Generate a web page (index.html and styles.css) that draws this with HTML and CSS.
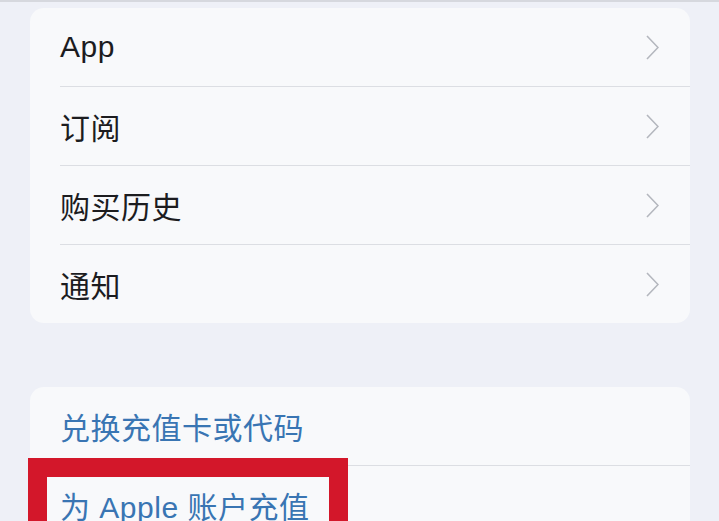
FILE: index.html
```html
<!DOCTYPE html>
<html lang="zh-CN">

<head>
    <meta charset="UTF-8">
    <meta name="viewport" content="width=device-width, initial-scale=1.0">
    <title>账户设置</title>
    <link rel="stylesheet" href="styles.css">
</head>

<body>
    <div class="group">
        <div class="row">
            <span class="label">App</span>
            <svg class="chevron" width="13" height="25" viewBox="0 0 13 25"><polyline points="1,1 12,12.5 1,24" /></svg>
        </div>
        <div class="row">
            <span class="label">订阅</span>
            <svg class="chevron" width="13" height="25" viewBox="0 0 13 25"><polyline points="1,1 12,12.5 1,24" /></svg>
        </div>
        <div class="row">
            <span class="label">购买历史</span>
            <svg class="chevron" width="13" height="25" viewBox="0 0 13 25"><polyline points="1,1 12,12.5 1,24" /></svg>
        </div>
        <div class="row">
            <span class="label">通知</span>
            <svg class="chevron" width="13" height="25" viewBox="0 0 13 25"><polyline points="1,1 12,12.5 1,24" /></svg>
        </div>
    </div>

    <div class="group group-links">
        <div class="row">
            <span class="label link">兑换充值卡或代码</span>
        </div>
        <div class="row">
            <span class="label link">为 Apple 账户充值</span>
        </div>
        <div class="highlight"></div>
    </div>
</body>

</html>
```

FILE: styles.css
```css
body {
    margin: 0;
    padding: 6px 29px 0 30px;
    border-top: 2px solid #d6d8de;
    background-color: #eef0f7;
    font-family: "Liberation Sans", "Noto Sans CJK SC", sans-serif;
    height: 513px;
    overflow: hidden;
    display: flex;
    flex-direction: column;
    gap: 64px;
}

.group {
    background-color: #f8f9fb;
    border-radius: 14px;
    display: flex;
    flex-direction: column;
}

.group-links {
    position: relative;
}

.row {
    height: 78px;
    display: flex;
    align-items: center;
    justify-content: space-between;
    padding: 0 31px 0 30px;
    position: relative;
}

.row + .row::before {
    content: "";
    position: absolute;
    top: -1px;
    left: 30px;
    right: 0;
    height: 1px;
    background-color: #dcdee3;
}

.row + .row {
    margin-top: 1px;
}

.label {
    font-size: 30px;
    letter-spacing: 0.5px;
    color: #1c1c1f;
}

.link {
    color: #3975b3;
}

.chevron polyline {
    fill: none;
    stroke: #b4b7be;
    stroke-width: 1.6;
}

.highlight {
    position: absolute;
    left: -2px;
    top: 71px;
    width: 320px;
    height: 90px;
    box-sizing: border-box;
    border: 19px solid #d3172a;
}
```
